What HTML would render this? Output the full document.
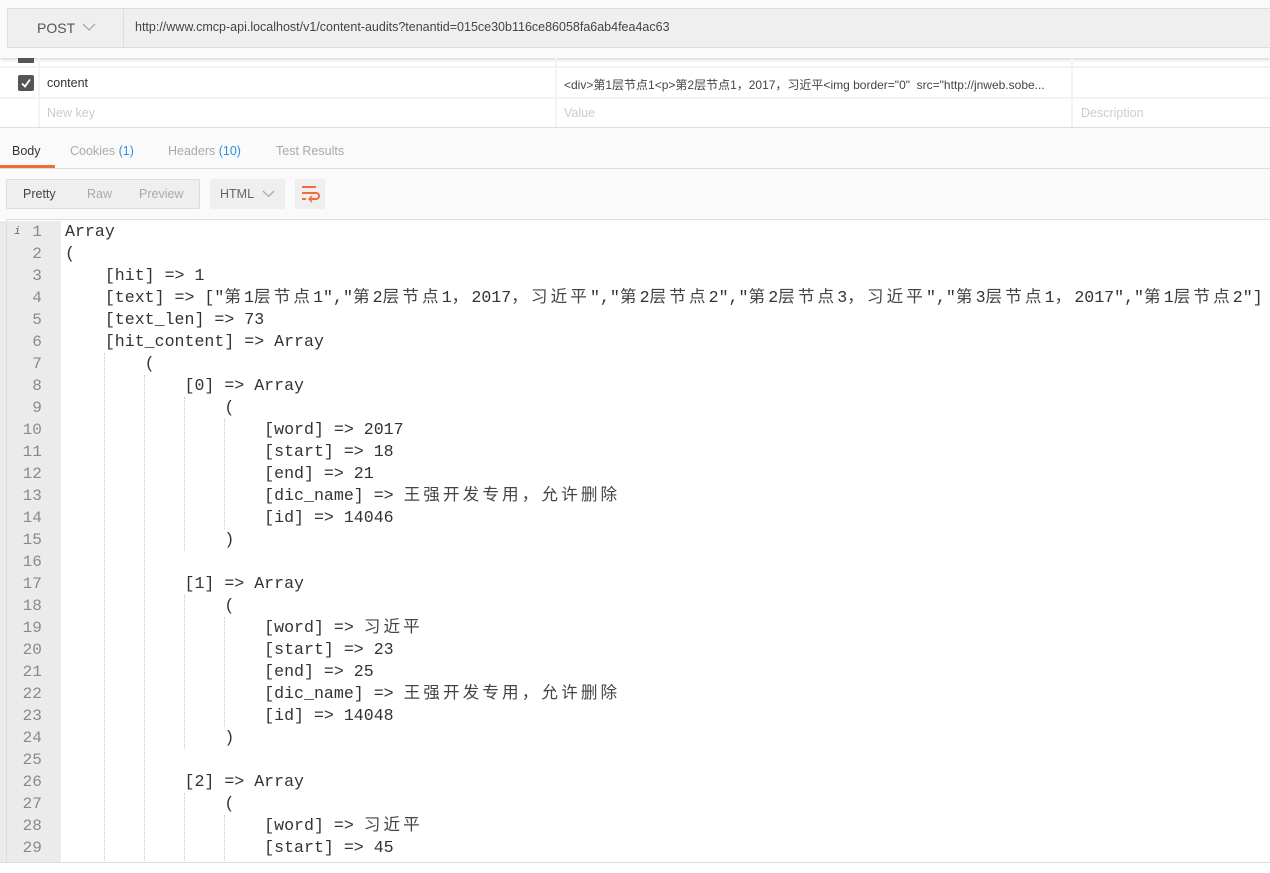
<!DOCTYPE html><html><head><meta charset="utf-8"><style>
body{margin:0;width:1270px;height:872px;overflow:hidden;background:#fff;font-family:"Liberation Sans","Noto Sans CJK SC",sans-serif;position:relative;font-size:12px;color:#505050}
.a{position:absolute}
.code{position:absolute;left:65px;top:221px;font-family:"Liberation Mono","Noto Sans CJK SC",monospace;font-size:16.6px;line-height:22px;color:#333;white-space:pre}
.c{letter-spacing:3.1px;color:#444}
.ln{position:absolute;left:0;top:221px;width:61px;height:651px;background:#ebebeb;font-family:"Liberation Mono",monospace;font-size:16px;line-height:22px;color:#8a8a8a;text-align:right;white-space:pre}
.g{position:absolute;border-left:1px dotted #ccc;width:0}
</style></head><body>
<div class="a" style="left:0;top:0;width:1270px;height:58px;background:#fafafa;box-shadow:0 2px 3px rgba(0,0,0,.15)"></div>
<div class="a" style="left:7px;top:8px;width:1263px;height:38px;background:#efefef;border:1px solid #ddd;border-right:none"></div>
<div class="a" style="left:123px;top:9px;width:1px;height:38px;background:#ddd"></div>
<div class="a" style="left:37px;top:20px;font-size:14px;color:#555">POST</div>
<svg class="a" style="left:82px;top:23px" width="14" height="9"><path d="M1 1l6 6 6-6" stroke="#aaa" stroke-width="1.3" fill="none"/></svg>
<div class="a" style="left:135px;top:20px;font-size:12.5px;color:#444">http://www.cmcp-api.localhost/v1/content-audits?tenantid=015ce30b116ce86058fa6ab4fea4ac63</div>
<div class="a" style="left:18px;top:58px;width:16px;height:5px;background:#555"></div>
<div class="a" style="left:0;top:66px;width:1270px;height:2px;background:#f3f3f3"></div>
<div class="a" style="left:0;top:97px;width:1270px;height:2px;background:#f3f3f3"></div>
<div class="a" style="left:0;top:127px;width:1270px;height:1px;background:#ddd"></div>
<div class="a" style="left:38px;top:58px;width:2px;height:69px;background:#f3f3f3"></div>
<div class="a" style="left:555px;top:58px;width:2px;height:69px;background:#f3f3f3"></div>
<div class="a" style="left:1071px;top:58px;width:2px;height:69px;background:#f3f3f3"></div>
<div class="a" style="left:18px;top:75px;width:16px;height:16px;background:#555;border-radius:2px"></div>
<svg class="a" style="left:18px;top:75px" width="16" height="16"><path d="M4 8.5l3 3 5-7" stroke="#fff" stroke-width="1.8" fill="none"/></svg>
<div class="a" style="left:47px;top:76px;font-size:12.5px;color:#333">content</div>
<div class="a" style="left:564px;top:76px;font-size:12px;color:#444">&lt;div&gt;第1层节点1&lt;p&gt;第2层节点1，2017，习近平&lt;img border="0"&nbsp; src="http://jnweb.sobe...</div>
<div class="a" style="left:47px;top:106px;font-size:12.5px;color:#ccc">New key</div>
<div class="a" style="left:564px;top:106px;font-size:12.5px;color:#ccc">Value</div>
<div class="a" style="left:1081px;top:106px;font-size:12.5px;color:#ccc">Description</div>
<div class="a" style="left:0;top:128px;width:1270px;height:40px;background:#fafafa;border-bottom:1px solid #ddd"></div>
<div class="a" style="left:12px;top:144px;font-size:12.5px;color:#333">Body</div>
<div class="a" style="left:0;top:165px;width:55px;height:3px;background:#f26b3a"></div>
<div class="a" style="left:70px;top:144px;font-size:12.5px;color:#aaa">Cookies <span style="color:#2d8fe0">(1)</span></div>
<div class="a" style="left:168px;top:144px;font-size:12.5px;color:#aaa">Headers <span style="color:#2d8fe0">(10)</span></div>
<div class="a" style="left:276px;top:144px;font-size:12.5px;color:#aaa">Test Results</div>
<div class="a" style="left:0;top:169px;width:1270px;height:50px;background:#fafafa"></div>
<div class="a" style="left:6px;top:179px;width:192px;height:28px;background:#efefef;border:1px solid #ddd;border-radius:2px"></div>
<div class="a" style="left:23px;top:187px;font-size:12.5px;color:#444">Pretty</div>
<div class="a" style="left:87px;top:187px;font-size:12.5px;color:#aaa">Raw</div>
<div class="a" style="left:139px;top:187px;font-size:12.5px;color:#aaa">Preview</div>
<div class="a" style="left:210px;top:179px;width:75px;height:30px;background:#efefef;border-radius:2px"></div>
<div class="a" style="left:220px;top:187px;font-size:12.5px;color:#666">HTML</div>
<svg class="a" style="left:262px;top:190px" width="13" height="8"><path d="M1 1l5.5 5.5L12 1" stroke="#aaa" stroke-width="1.3" fill="none"/></svg>
<div class="a" style="left:295px;top:179px;width:30px;height:30px;background:#efefef;border-radius:2px"></div>
<svg class="a" style="left:300px;top:185px" width="20" height="18"><path d="M2 2h14M2 8h14a3 3 0 0 1 0 6h-6M2 14h4" stroke="#f26b3a" stroke-width="2" fill="none"/><path d="M12 11l-3 3 3 3" stroke="#f26b3a" stroke-width="1.5" fill="none"/></svg>
<div class="a" style="left:6px;top:219px;width:1264px;height:1px;background:#ddd"></div>
<div class="ln"><span style="position:absolute;left:14px;font-size:11px;font-style:italic;color:#666">i</span>1 &nbsp;
2 &nbsp;
3 &nbsp;
4 &nbsp;
5 &nbsp;
6 &nbsp;
7 &nbsp;
8 &nbsp;
9 &nbsp;
10 &nbsp;
11 &nbsp;
12 &nbsp;
13 &nbsp;
14 &nbsp;
15 &nbsp;
16 &nbsp;
17 &nbsp;
18 &nbsp;
19 &nbsp;
20 &nbsp;
21 &nbsp;
22 &nbsp;
23 &nbsp;
24 &nbsp;
25 &nbsp;
26 &nbsp;
27 &nbsp;
28 &nbsp;
29 &nbsp;</div>
<div class="a" style="left:6px;top:220px;width:1px;height:652px;background:#ddd"></div>
<div class="g" style="left:104px;top:353px;height:520px"></div>
<div class="g" style="left:144px;top:375px;height:498px"></div>
<div class="g" style="left:184px;top:397px;height:154px"></div>
<div class="g" style="left:184px;top:595px;height:154px"></div>
<div class="g" style="left:184px;top:793px;height:80px"></div>
<div class="g" style="left:224px;top:419px;height:110px"></div>
<div class="g" style="left:224px;top:617px;height:110px"></div>
<div class="g" style="left:224px;top:815px;height:58px"></div>
<div class="code">Array
(
    [hit] =&gt; 1
    [text] =&gt; ["<span class="c">第</span>1<span class="c">层节点</span>1","<span class="c">第</span>2<span class="c">层节点</span>1<span class="c">，</span>2017<span class="c">，习近平</span>","<span class="c">第</span>2<span class="c">层节点</span>2","<span class="c">第</span>2<span class="c">层节点</span>3<span class="c">，习近平</span>","<span class="c">第</span>3<span class="c">层节点</span>1<span class="c">，</span>2017","<span class="c">第</span>1<span class="c">层节点</span>2"]
    [text_len] =&gt; 73
    [hit_content] =&gt; Array
        (
            [0] =&gt; Array
                (
                    [word] =&gt; 2017
                    [start] =&gt; 18
                    [end] =&gt; 21
                    [dic_name] =&gt; <span class="c">王强开发专用，允许删除</span>
                    [id] =&gt; 14046
                )

            [1] =&gt; Array
                (
                    [word] =&gt; <span class="c">习近平</span>
                    [start] =&gt; 23
                    [end] =&gt; 25
                    [dic_name] =&gt; <span class="c">王强开发专用，允许删除</span>
                    [id] =&gt; 14048
                )

            [2] =&gt; Array
                (
                    [word] =&gt; <span class="c">习近平</span>
                    [start] =&gt; 45
</div>
<div class="a" style="left:0;top:862px;width:1270px;height:10px;background:#fff;border-top:1px solid #ddd"></div>
</body></html>
